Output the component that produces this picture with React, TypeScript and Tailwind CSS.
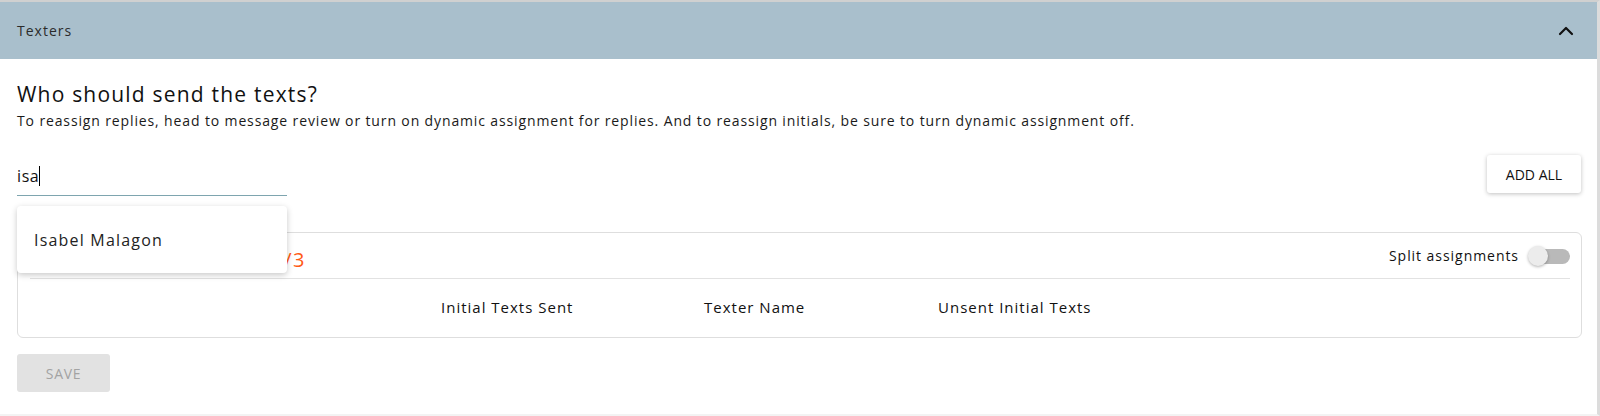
import { ChevronUp } from "lucide-react"

const font = "font-['Open_Sans',_'Noto_Sans',_sans-serif]"

function Toggle() {
  return (
    <div className="relative w-[42px] h-[20px] flex items-center">
      <div className="ml-[2px] w-[40px] h-[15px] rounded-full bg-[#b9b9b9]" />
      <div className="absolute left-0 top-0 w-[20px] h-[20px] rounded-full bg-[#ececec] shadow-[0_1px_3px_rgba(0,0,0,0.3)]" />
    </div>
  )
}

export default function App() {
  return (
    <div className={`w-[1600px] h-[416px] bg-white border-t-2 border-t-[#d0d0d0] border-r-[3px] border-r-[#dcdcdc] border-b-2 border-b-[#f3f3f3] text-[#111] ${font}`}>
      {/* accordion header */}
      <div className="h-[57px] bg-[#a9bfcc] flex items-center justify-between pl-[17px] pr-[19px]">
        <span className="text-[14px] tracking-[1px] text-[#2b2b2b]">Texters</span>
        <ChevronUp className="h-[24px] w-[24px] text-[#111]" strokeWidth={2.2} />
      </div>

      <div className="pl-[17px] pr-[15px]">
        <h2 className="mt-[21px] text-[21px] leading-[28px] tracking-[1.2px] font-medium">Who should send the texts?</h2>
        <p className="mt-[3px] text-[14px] leading-[20px] tracking-[0.87px] text-[#1a1a1a] whitespace-nowrap">
          To reassign replies, head to message review or turn on dynamic assignment for replies. And to reassign initials, be sure to turn dynamic assignment off.
        </p>

        <div className="mt-[24px] flex items-start justify-between">
          <div className="relative mt-[9px] w-[270px]">
            <div className="h-[32px] border-b border-[#7ea5af] flex items-start">
              <span className="text-[16px] leading-[24px] tracking-[0.6px]">isa</span>
              <span className="mt-[2px] inline-block w-px h-[20px] bg-black" />
            </div>
            {/* autocomplete menu */}
            <div className="absolute left-0 top-[42px] z-10 w-[270px] h-[67px] bg-white rounded-[4px] shadow-[0_2px_6px_rgba(0,0,0,0.22)] flex items-center pl-[17px]">
              <span className="text-[16px] tracking-[1.2px] text-[#222]">Isabel Malagon</span>
            </div>
          </div>
          <button className="w-[94px] h-[38px] mr-[1px] bg-white rounded-[3px] shadow-[0_1px_4px_rgba(0,0,0,0.25)] text-[14px] text-[#111]">
            ADD ALL
          </button>
        </div>

        <div className="mt-[36px] h-[106px] border border-[#dedede] rounded-[6px] pl-[12px] pr-[11px]">
          <div className="h-[46px] flex justify-between border-b border-[#e2e2e2]">
            <div className="mt-[13px] w-[276px] flex justify-end">
              <span className="text-[20px] leading-[28px] tracking-[1.5px] text-[#ff5a14] whitespace-nowrap">Assigned initial texts: 0/3</span>
            </div>
            <div className="mt-[13px] h-[20px] flex items-center gap-[9px]">
              <span className="text-[14px] leading-[20px] tracking-[0.95px]">Split assignments</span>
              <Toggle />
            </div>
          </div>
          <div className="h-[57px] grid grid-cols-[411px_263px_234px_1fr] items-center text-[15px] tracking-[1px]">
            <span />
            <span>Initial Texts Sent</span>
            <span>Texter Name</span>
            <span>Unsent Initial Texts</span>
          </div>
        </div>

        <button className="mt-[16px] w-[93px] h-[38px] bg-[#e2e2e2] rounded-[3px] text-[14px] tracking-[0.7px] text-[#a3a3a3]">
          SAVE
        </button>
      </div>
    </div>
  )
}
